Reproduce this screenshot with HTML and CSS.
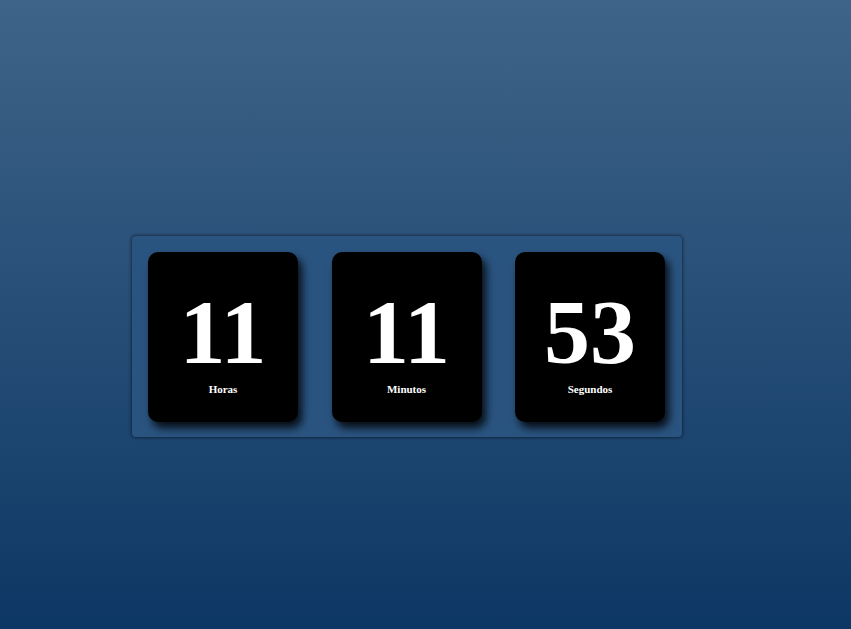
FILE: index.html
```html
<!DOCTYPE html>
<html lang="es">
<head>
<meta charset="utf-8">
<title>Reloj</title>
<link rel="stylesheet" href="styles.css">
</head>
<body>
<main class="page">
  <section class="clock">
    <div class="card">
      <div class="num">11</div>
      <div class="label">Horas</div>
    </div>
    <div class="card">
      <div class="num">11</div>
      <div class="label">Minutos</div>
    </div>
    <div class="card">
      <div class="num">53</div>
      <div class="label">Segundos</div>
    </div>
  </section>
</main>
</body>
</html>
```

FILE: styles.css
```css
html, body {
  margin: 0;
  padding: 0;
  height: 100%;
}
body {
  background: linear-gradient(to bottom, #3f6489 0%, #0d3764 100%);
  font-family: "Liberation Serif", "Times New Roman", serif;
  color: #fff;
}
.page {
  height: 100%;
  display: flex;
  align-items: flex-start;
  padding: 236px 0 0 132px;
  box-sizing: border-box;
}
.clock {
  display: flex;
  gap: 33.5px;
  padding: 16px 17px 15px 16px;
  width: 550px;
  box-sizing: border-box;
  background: #2a5480;
  border-radius: 4px;
  box-shadow: 0 0 3px 1px rgba(0, 0, 0, 0.45);
}
.card {
  width: 150px;
  height: 170px;
  background: #000;
  border-radius: 10px;
  box-shadow: 4px 6px 9px rgba(0, 0, 0, 0.85);
  display: flex;
  flex-direction: column;
  align-items: center;
  justify-content: center;
}
.num {
  font-size: 92px;
  font-weight: bold;
  line-height: 1;
  margin-top: 6px;
}
.label {
  font-size: 11px;
  font-weight: bold;
  margin-top: 5px;
}
```
